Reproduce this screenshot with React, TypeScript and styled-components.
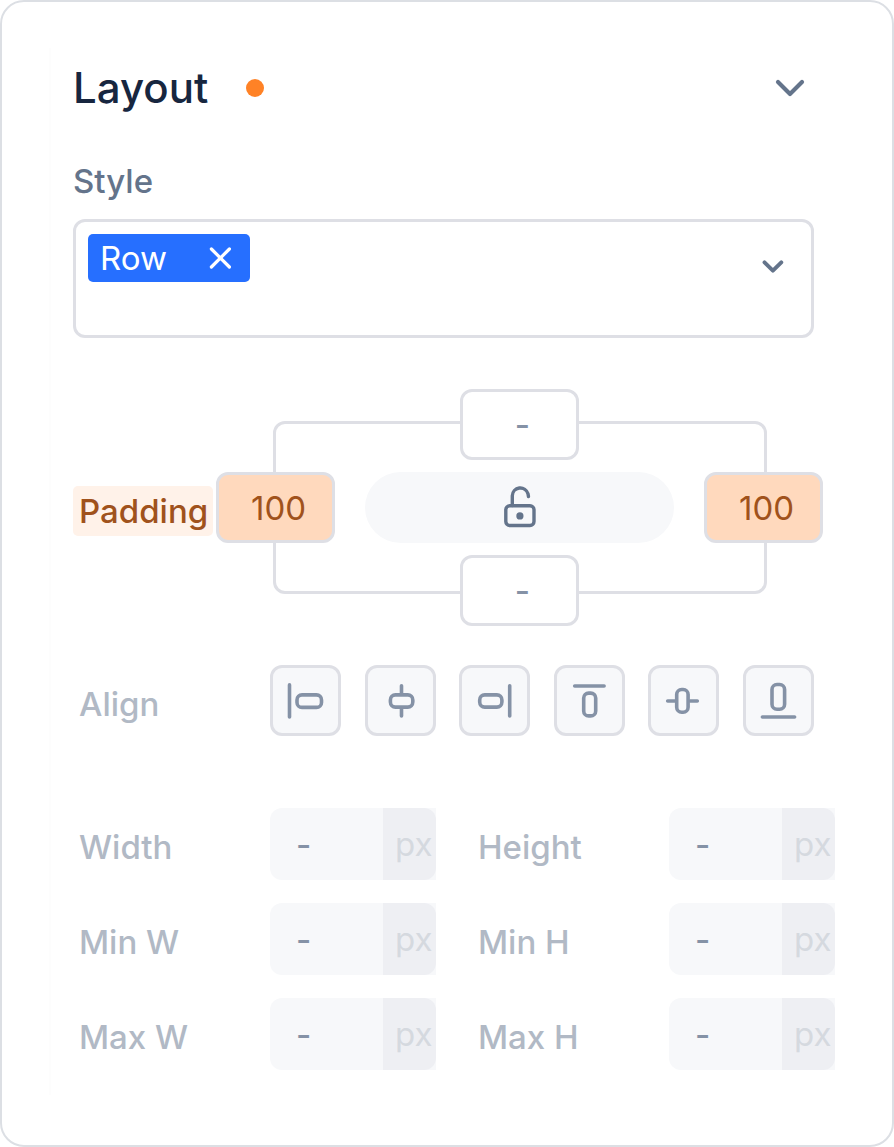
import React from "react";
import styled, { createGlobalStyle } from "styled-components";

const color = {
  ink: "#17263f",
  slate: "#64748b",
  icon: "#8592a6",
  muted: "#b1b9c5",
  faint: "#d5d9df",
  line: "#dedfe5",
  surface: "#f7f8fa",
  unit: "#eeeff3",
  blue: "#266fff",
  orange: "#ff8226",
  rust: "#a0521c",
  peach: "#ffd9bd",
  blush: "#fff2e9",
};

const GlobalStyle = createGlobalStyle`
  *, *::before, *::after { box-sizing: border-box; }
  body { margin: 0; background: #fff; font-family: Inter, sans-serif; }
  button, input { font: inherit; color: inherit; margin: 0; }
  svg { display: block; }
`;

const Card = styled.main`
  border: 2px solid #dcdfe4;
  border-radius: 24px;
  background: #fff;
  padding: 46px 57px 50px 47px;
`;

const Panel = styled.section`
  border-left: 2px solid #fdfdfd;
  padding: 12px 0 25px 22px;
`;

const Header = styled.header`
  display: flex;
  align-items: center;
  height: 56px;
  padding-right: 29px;
`;

const Title = styled.h2`
  margin: 0;
  font-size: 42px;
  line-height: 56px;
  font-weight: 500;
  color: ${color.ink};
`;

const Dot = styled.span`
  width: 18px;
  height: 18px;
  margin-left: 38px;
  border-radius: 50%;
  background: ${color.orange};
`;

const IconButton = styled.button<{ $push?: boolean }>`
  display: flex;
  align-items: center;
  justify-content: center;
  padding: 0;
  border: 0;
  background: none;
  color: ${color.slate};
  cursor: pointer;
  margin-left: ${(p) => (p.$push ? "auto" : "0")};
`;

const StyleLabel = styled.div`
  margin-top: 45px;
  font-size: 33px;
  line-height: 40px;
  font-weight: 500;
  color: ${color.slate};
`;

const TagBox = styled.div`
  display: flex;
  align-items: flex-start;
  justify-content: space-between;
  min-height: 119px;
  margin: 18px 21px 0 0;
  padding: 12px 26px 12px 12px;
  border: 3px solid ${color.line};
  border-radius: 12px;

  > ${IconButton} { margin-top: 12px; }
`;

const Tag = styled.span`
  display: flex;
  align-items: center;
  justify-content: space-between;
  width: 162px;
  height: 48px;
  padding: 0 18px 0 12px;
  border-radius: 5px;
  background: ${color.blue};
  color: #fff;
  font-size: 33px;
  line-height: 48px;

  ${IconButton} { color: #fff; }
`;

const PaddingRow = styled.div`
  display: flex;
  align-items: center;
  gap: 3px;
  margin: 51px 12px 0 0;
`;

const PaddingLabel = styled.div`
  width: 140px;
  margin-top: 7px;
  padding: 0 6px;
  border-radius: 5px;
  background: ${color.blush};
  color: ${color.rust};
  font-size: 33px;
  line-height: 50px;
  font-weight: 500;
`;

const BoxModel = styled.div`
  position: relative;
  flex: 1;
  display: grid;
  grid-template-columns: 119px 1fr 119px;
  grid-template-areas: ". top ." "left lock right" ". bottom .";
  gap: 12px 30px;
  justify-items: center;

  &::before {
    content: "";
    position: absolute;
    inset: 32px 56px 32px 57px;
    border: 3px solid ${color.line};
    border-radius: 12px;
  }
`;

const SideInput = styled.input<{ $area: string; $set?: boolean }>`
  position: relative;
  grid-area: ${(p) => p.$area};
  width: 119px;
  height: 71px;
  padding: 0 0 0 6px;
  border: 3px solid ${color.line};
  border-radius: 12px;
  background: ${(p) => (p.$set ? color.peach : "#fff")};
  color: ${(p) => (p.$set ? color.rust : color.icon)};
  font-size: 33px;
  font-weight: ${(p) => (p.$set ? 400 : 500)};
  text-align: center;
`;

const LockButton = styled(IconButton)`
  grid-area: lock;
  width: 100%;
  height: 71px;
  border-radius: 36px;
  background: ${color.surface};
`;

const FieldLabel = styled.label`
  flex: 1;
  padding-top: 6px;
  color: ${color.muted};
  font-size: 33px;
  line-height: 40px;
  font-weight: 500;
`;

const AlignRow = styled.div`
  display: flex;
  align-items: center;
  margin: 39px 21px 0 6px;
`;

const AlignLabel = styled(FieldLabel).attrs({ as: "span" })`
  flex: none;
  width: 191px;
`;

const AlignGroup = styled.div`
  flex: 1;
  display: flex;
  justify-content: space-between;
`;

const AlignButton = styled(IconButton)`
  width: 71px;
  height: 71px;
  border: 3px solid ${color.line};
  border-radius: 12px;
  background: ${color.surface};
  color: ${color.icon};
`;

const SizeGrid = styled.div`
  display: grid;
  grid-template-columns: 1fr 1fr;
  gap: 23px 42px;
  margin: 72px 0 0 6px;
`;

const SizeField = styled.div`
  display: flex;
  align-items: center;
`;

const SizeControl = styled.div`
  display: flex;
  width: 166px;
  height: 72px;
  border-radius: 12px 0 0 12px;
  background: ${color.surface};
`;

const SizeInput = styled.input`
  flex: 1;
  min-width: 0;
  padding: 2px 0 0 26px;
  border: 0;
  background: none;
  color: ${color.icon};
  font-size: 33px;
  font-weight: 500;
`;

const Unit = styled.span`
  width: 53px;
  padding-left: 12px;
  border-radius: 0 12px 12px 0;
  background: ${color.unit};
  color: ${color.faint};
  font-size: 33px;
  line-height: 72px;
`;

const stroke = {
  fill: "none",
  stroke: "currentColor",
  strokeLinecap: "round" as const,
  strokeLinejoin: "round" as const,
};

const alignments = [
  { name: "Align left", line: "M16.5 16.9V49", rect: [24, 26.9, 24.5, 12.5] },
  { name: "Align center", line: "M33.5 17.7V25M33.5 41V48", rect: [22.4, 26.9, 22.4, 12.2] },
  { name: "Align right", line: "M47.7 17.7V48", rect: [17.7, 26.9, 22.2, 12.2] },
  { name: "Align top", line: "M17.7 18H47.1", rect: [26.7, 25.1, 12, 22.8] },
  { name: "Align middle", line: "M16.7 33H24M39 33H46.3", rect: [25.7, 21.5, 11.4, 22.8] },
  { name: "Align bottom", line: "M16.4 49H48.6", rect: [26, 16.5, 12.6, 24.8] },
];

const sizes = ["Width", "Height", "Min W", "Min H", "Max W", "Max H"];

export default function App() {
  return (
    <>
      <GlobalStyle />
      <Card>
        <Panel>
          <Header>
            <Title>Layout</Title>
            <Dot />
            <IconButton $push aria-label="Collapse layout">
              <svg width="32" height="24" viewBox="0 0 32 24" {...stroke} strokeWidth="4.2">
                <path d="M4 6L16 18L28 6" />
              </svg>
            </IconButton>
          </Header>

          <StyleLabel id="style-label">Style</StyleLabel>
          <TagBox role="group" aria-labelledby="style-label">
            <Tag>
              Row
              <IconButton aria-label="Remove Row">
                <svg width="24" height="24" viewBox="0 0 24 24" {...stroke} strokeWidth="3.2">
                  <path d="M3.4 3L21.4 21M21.4 3L3.4 21" />
                </svg>
              </IconButton>
            </Tag>
            <IconButton aria-label="Open style options">
              <svg width="24" height="40" viewBox="0 0 24 40" {...stroke} strokeWidth="3.9">
                <path d="M3.5 16.3L11.9 24.7L20.3 16.3" />
              </svg>
            </IconButton>
          </TagBox>

          <PaddingRow>
            <PaddingLabel>Padding</PaddingLabel>
            <BoxModel>
              <SideInput $area="top" aria-label="Padding top" defaultValue="-" />
              <SideInput $area="left" $set aria-label="Padding left" defaultValue="100" />
              <LockButton aria-label="Link padding sides">
                <svg width="48" height="48" viewBox="0 0 48 48" {...stroke} strokeWidth="3.4">
                  <rect x="9.8" y="21.8" width="28.2" height="19.7" rx="4" />
                  <path d="M16.3 21.5V11.8a8 8 0 0 1 15.7-2l.5 2.8" />
                  <circle cx="23.9" cy="31.9" r="3.6" fill="currentColor" stroke="none" />
                </svg>
              </LockButton>
              <SideInput $area="right" $set aria-label="Padding right" defaultValue="100" />
              <SideInput $area="bottom" aria-label="Padding bottom" defaultValue="-" />
            </BoxModel>
          </PaddingRow>

          <AlignRow>
            <AlignLabel>Align</AlignLabel>
            <AlignGroup>
              {alignments.map(({ name, line, rect: [x, y, w, h] }) => (
                <AlignButton key={name} aria-label={name}>
                  <svg width="65" height="65" viewBox="0 0 65 65" {...stroke} strokeWidth="3.6">
                    <path d={line} />
                    <rect x={x} y={y} width={w} height={h} rx="5" />
                  </svg>
                </AlignButton>
              ))}
            </AlignGroup>
          </AlignRow>

          <SizeGrid>
            {sizes.map((name) => {
              const id = name.toLowerCase().replace(" ", "-");
              return (
                <SizeField key={name}>
                  <FieldLabel htmlFor={id}>{name}</FieldLabel>
                  <SizeControl>
                    <SizeInput id={id} defaultValue="-" />
                    <Unit>px</Unit>
                  </SizeControl>
                </SizeField>
              );
            })}
          </SizeGrid>
        </Panel>
      </Card>
    </>
  );
}
